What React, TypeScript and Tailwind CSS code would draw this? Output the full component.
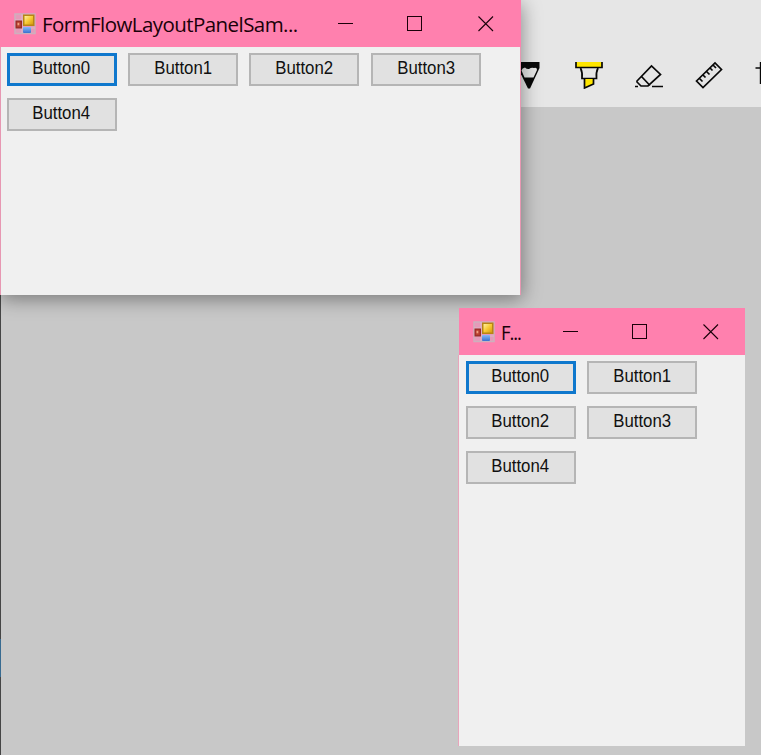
import React from "react";

function AppIcon() {
  return (
    <svg className="h-[22px] w-[22px] shrink-0" viewBox="0 0 22 22">
      <defs>
        <linearGradient id="gold" x1="0" y1="0" x2="1" y2="1">
          <stop offset="0" stopColor="#fff0a0" />
          <stop offset="0.5" stopColor="#f8ca35" />
          <stop offset="1" stopColor="#d79a10" />
        </linearGradient>
        <linearGradient id="azure" x1="0" y1="0" x2="0" y2="1">
          <stop offset="0" stopColor="#86b8f8" />
          <stop offset="1" stopColor="#3972cf" />
        </linearGradient>
      </defs>
      <rect x="1" y="1" width="20" height="19.5" fill="#e59ab9" stroke="#cdb0bd" strokeWidth="1.5" />
      <path d="M8 1V20M1 7H9M1 15H21" stroke="#d9b8c8" strokeWidth="1.2" />
      <rect x="9" y="1.500" width="11.5" height="11.5" fill="#b88614" />
      <rect x="10.5" y="3" width="8.500" height="8.5" fill="url(#gold)" />
      <rect x="1.500" y="7.500" width="6.5" height="8" fill="#982c28" />
      <rect x="2.7" y="8.7" width="4" height="5.5" fill="#b8402f" />
      <rect x="3.5" y="9.8" width="1.8" height="2.5" fill="#f0a080" />
      <rect x="9" y="14" width="8" height="6" rx="1" fill="url(#azure)" />
    </svg>
  );
}

function WindowControls() {
  return (
    <svg className="h-4 w-[156px] shrink-0" viewBox="0 0 156 16" fill="none" stroke="#1a0009">
      <path d="M0 7.5H15" shapeRendering="crispEdges" />
      <rect x="69.5" y="0.5" width="14" height="14" shapeRendering="crispEdges" />
      <path d="M140.5 0.5L155 15M155 0.5L140.5 15" strokeWidth="1.1" />
    </svg>
  );
}

function FormButton({ label, focused = false }: { label: string; focused?: boolean }) {
  return (
    <button
      className={`flex h-[33px] w-[110px] justify-center bg-[#e1e1e1] font-['Liberation_Sans',Arial,sans-serif] text-[17.5px] text-[#101010] ${
        focused ? "border-[3px] border-[#0f78cd] leading-[25px]" : "border-2 border-[#b5b5b5] leading-[27px]"
      }`}
    >
      <span className="inline-block scale-x-[0.96]">{label}</span>
    </button>
  );
}

function TitleBar({ title, tight = false }: { title: string; tight?: boolean }) {
  return (
    <div
      className={`flex h-[47px] shrink-0 items-center justify-between bg-[#ff80ae] pl-[14px] ${
        tight ? "pr-[26px]" : "pr-[27px]"
      }`}
    >
      <div className="flex items-center gap-[6px]">
        <AppIcon />
        <span
          className={`origin-left font-['Open_Sans',sans-serif] text-[20.5px] leading-[28px] whitespace-nowrap text-[#1a0009] ${
            tight ? "scale-x-90 pt-px tracking-[-1.2px]" : "pt-px tracking-[-0.56px]"
          }`}
        >
          {title}
        </span>
      </div>
      <WindowControls />
    </div>
  );
}

function ToolIcons() {
  return (
    <svg className="h-[28px] w-[240px] shrink-0" viewBox="521 61 240 28" fill="none" stroke="#080808" strokeWidth="1.7">
      <path d="M518 62H539.5V68L530 88.5H528L518 68Z" fill="#080808" stroke="none" />
      <path d="M521.5 70.5Q522 68 525 67.500Q527 69.500 529 69Q531.500 67 534 68Q537 67 537 70L533.5 77.5H524.5Z" fill="#e6e6e6" stroke="none" />
      <path d="M576 62V67.5H602V62" fill="#ffe600" />
      <path d="M580.5 68C582 71 582.5 74 582 78.500H596.500C596 74 596.500 71 598 68" />
      <path d="M584.5 79V88L593.500 84V79" fill="#ffe600" />
      <path d="M637 81L651.500 66L660.500 74.500L648 86H641L637 82ZM641.500 76.500L650 85.500M635 86.500H638M652 86.500H663" />
      <path d="M696.500 81L715 63L721.500 69.500L703 87.500ZM699.500 78.500L702.500 81.500M703 75L705.500 77.500M706.500 71.500L709.500 74.500M710 68L712.500 70.500M713 65L716 68" />
      <path d="M755.500 68H761M760.500 62V84" strokeWidth="1.4" />
    </svg>
  );
}

export default function App() {
  return (
    <div className="relative h-[755px] w-[761px] overflow-hidden bg-[#c8c8c8]">
      <div className="flex h-[107px] items-start justify-end bg-[#e6e6e6] pt-[61px]">
        <ToolIcons />
      </div>
      <div className="flex h-[648px] w-px flex-col bg-[#454545]">
        <div className="mt-[532px] h-[38px] bg-[#386b91]" />
      </div>

      <section className="absolute top-0 left-0 flex h-[295px] w-[521px] flex-col bg-[#f0f0f0] shadow-[1px_4px_18px_rgba(0,0,0,0.4)]">
        <TitleBar title="FormFlowLayoutPanelSam..." />
        <div className="flex flex-1 flex-wrap content-start gap-x-[11.4px] gap-y-3 border-x border-[#e797b2] pt-[6px] pl-[5.6px]">
          <FormButton label="Button0" focused />
          <FormButton label="Button1" />
          <FormButton label="Button2" />
          <FormButton label="Button3" />
          <FormButton label="Button4" />
        </div>
      </section>

      <section className="absolute top-[308px] left-[459px] flex h-[438px] w-[286px] flex-col bg-[#f0f0f0]">
        <TitleBar title="F..." tight />
        <div className="flex flex-1 flex-wrap content-start gap-x-[11.4px] gap-y-3 pt-[6px] pl-[6.6px] shadow-[-1px_0_0_#e8a5bb]">
          <FormButton label="Button0" focused />
          <FormButton label="Button1" />
          <FormButton label="Button2" />
          <FormButton label="Button3" />
          <FormButton label="Button4" />
        </div>
      </section>
    </div>
  );
}
